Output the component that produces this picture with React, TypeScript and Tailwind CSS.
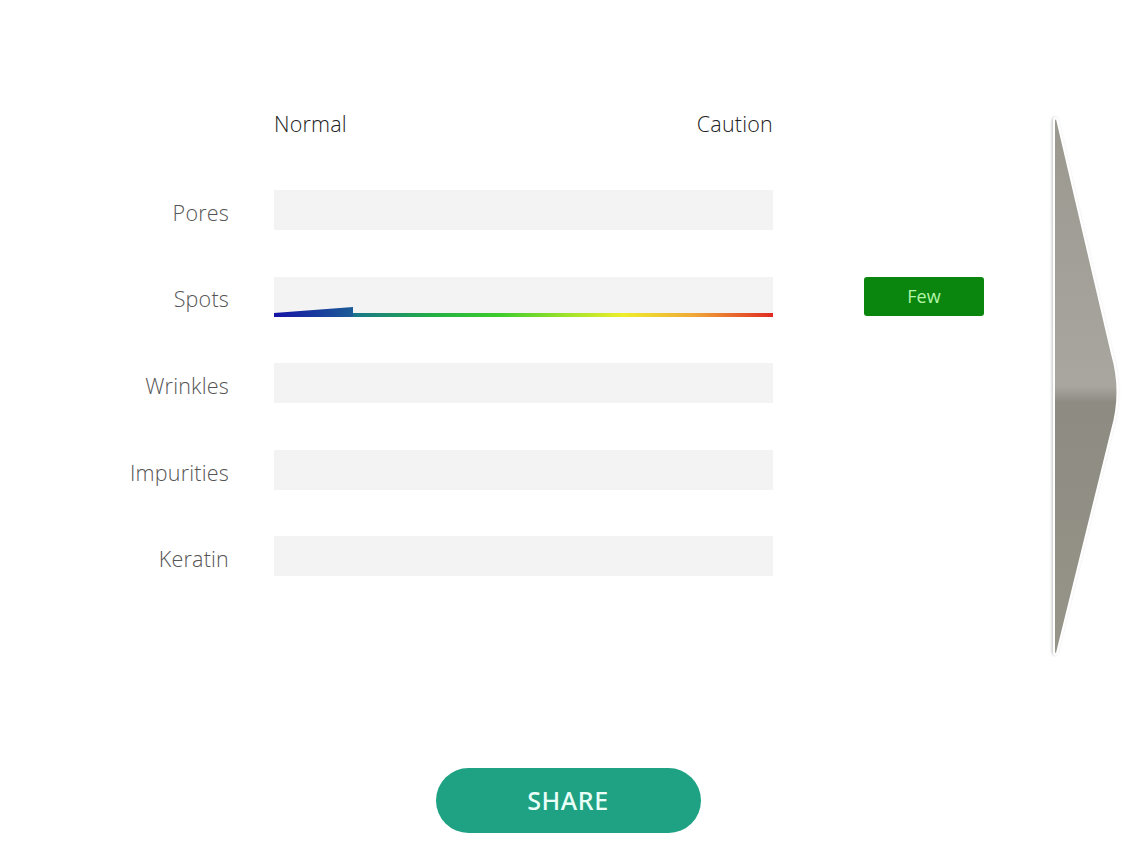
const rows = [
  { label: "Pores" },
  { label: "Spots", level: "Few" },
  { label: "Wrinkles" },
  { label: "Impurities" },
  { label: "Keratin" },
];

const SideArrow = () => (
  <svg width="78" height="544" viewBox="0 0 78 544" className="ml-[64px] mt-[2px] shrink-0">
    <defs>
      <linearGradient id="arrowFill" x1="0" y1="0" x2="0" y2="1">
        <stop offset="0" stopColor="#9a988f" />
        <stop offset="0.5" stopColor="#a8a69e" />
        <stop offset="0.53" stopColor="#8d8b82" />
        <stop offset="1" stopColor="#979589" />
      </linearGradient>
      <filter id="arrowShadow" x="-20%" y="-5%" width="140%" height="110%">
        <feDropShadow dx="-1" dy="0" stdDeviation="1.5" floodColor="#000" floodOpacity="0.25" />
      </filter>
    </defs>
    <path
      d="M6 8 Q6 3 9 5 L64 240 Q75 278 64 316 L9 539 Q6 542 6 537 Z"
      fill="url(#arrowFill)"
      stroke="#ffffff"
      strokeWidth="2"
      filter="url(#arrowShadow)"
    />
  </svg>
);

const SpotsMeter = () => (
  <>
    <div className="absolute left-0 right-0 bottom-0 h-[4px] bg-[linear-gradient(to_right,#1212a4_0%,#1a4a9c_10%,#1a7a86_17%,#22b044_32%,#3ccc2c_45%,#a8e42a_60%,#eeee2a_70%,#f0a838_84%,#e02a22_100%)]" />
    <svg width="80" height="10" viewBox="0 0 80 10" className="absolute left-0 bottom-0">
      <defs>
        <linearGradient id="wedge" x1="0" y1="0" x2="1" y2="0">
          <stop offset="0" stopColor="#1414a6" />
          <stop offset="1" stopColor="#1c5c96" />
        </linearGradient>
      </defs>
      <polygon points="0,6 79,0 79,10 0,10" fill="url(#wedge)" />
    </svg>
  </>
);

export default function App() {
  return (
    <div className="w-[1136px] h-[852px] bg-white font-['Open_Sans','Noto_Sans',sans-serif] font-light flex flex-col">
      <div className="flex pt-[112px]">
        <div className="flex flex-col">
          <div className="flex h-6 items-center pl-[274px] w-[773px] justify-between text-[21.5px] tracking-[0.2px] text-[#222] leading-none">
            <span>Normal</span>
            <span>Caution</span>
          </div>
          <div className="flex flex-col gap-[46.6px] mt-[54px]">
            {rows.map((r) => (
              <div key={r.label} className="flex items-center">
                <span className="w-[229px] mt-[5px] text-right text-[21.5px] tracking-[0.2px] text-[#555] leading-none">{r.label}</span>
                <div className="relative ml-[45px] w-[499px] h-10 bg-[#f3f3f3]">
                  {r.level && <SpotsMeter />}
                </div>
                {r.level && (
                  <div className="ml-[91px] w-[120px] h-[39px] rounded-[3px] bg-[#0a860e] flex items-center justify-center text-[18px] font-normal text-[#b4f5a8]">
                    {r.level}
                  </div>
                )}
              </div>
            ))}
          </div>
        </div>
        <SideArrow />
      </div>
      <div className="flex justify-center mt-auto mb-[19px]">
        <button className="w-[265px] h-[65px] rounded-full bg-[#1fa284] text-[#eafff8] text-[25px] font-['Noto_Sans',sans-serif] font-medium tracking-wide">
          SHARE
        </button>
      </div>
    </div>
  );
}
